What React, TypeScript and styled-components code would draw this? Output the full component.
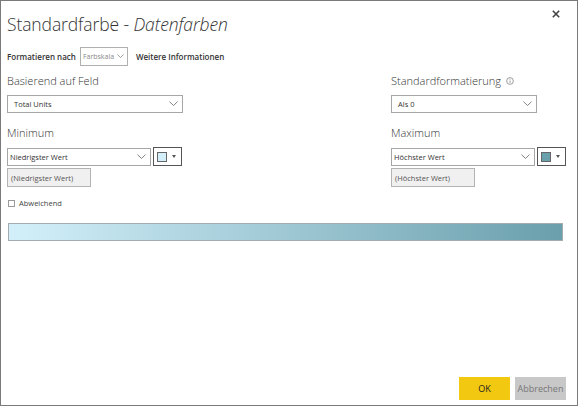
import React from "react";
import styled, { createGlobalStyle } from "styled-components";

const Global = createGlobalStyle`
  html, body { margin: 0; padding: 0; background: #fff; }
  * { box-sizing: border-box; }
  body { font-family: "Open Sans", "Noto Sans", sans-serif; color: #333; }
`;

const Dialog = styled.div`
  position: relative;
  width: 578px;
  height: 406px;
  border: 1px solid #7a7a7a;
  background: #fff;
  display: flex;
  flex-direction: column;
  padding: 10px 11px 5px 6px;
`;

const Close = styled.button`
  position: absolute;
  top: 6px;
  right: 14px;
  border: none;
  background: none;
  padding: 0;
  width: 14px;
  height: 14px;
  display: flex;
  align-items: center;
  justify-content: center;
`;

const Title = styled.h1`
  margin: 0;
  font-weight: 300;
  font-size: 17.5px;
  line-height: 26px;
  color: #333;
  letter-spacing: -0.1px;
  em { font-style: italic; }
`;

const FormatRow = styled.div`
  display: flex;
  align-items: center;
  gap: 4px;
  margin-top: 10px;
  height: 19px;
`;

const Bold = styled.span`
  font-size: 8px;
  font-weight: 600;
  color: #333;
`;

const SmallSelect = styled.div`
  width: 48px;
  height: 19px;
  border: 1px solid #b0b0b0;
  display: flex;
  align-items: center;
  justify-content: space-between;
  padding: 0 3px 0 2px;
  font-size: 7px;
  color: #888;
  margin-right: 4px;
`;

const Columns = styled.div`
  display: flex;
  justify-content: space-between;
  margin-top: 7px;
`;

const Column = styled.div<{ $w: number }>`
  width: ${(p) => p.$w}px;
  display: flex;
  flex-direction: column;
`;

const Label = styled.div<{ $top?: number }>`
  font-size: 11px;
  font-weight: 300;
  color: #333;
  height: 16px;
  line-height: 16px;
  margin-top: ${(p) => p.$top ?? 0}px;
  display: flex;
  align-items: center;
  gap: 5px;
`;

const Select = styled.div<{ $w: number; $pad?: number }>`
  width: ${(p) => p.$w}px;
  height: 18px;
  border: 1px solid #a6a6a6;
  display: flex;
  align-items: center;
  justify-content: space-between;
  padding: 0 4px 0 ${(p) => p.$pad ?? 2}px;
  font-size: 7.5px;
  color: #333;
  background: #fff;
`;

const FieldRow = styled.div`
  display: flex;
  align-items: center;
  gap: 2px;
  margin-top: 6px;
`;

const ColorButton = styled.div`
  width: 29px;
  height: 19px;
  border: 1px solid #555;
  display: flex;
  align-items: center;
  padding-left: 3px;
  gap: 5px;
`;

const Swatch = styled.div<{ $c: string }>`
  width: 10px;
  height: 10px;
  background: ${(p) => p.$c};
  border: 1px solid #666;
`;

const Caret = styled.div`
  width: 0;
  height: 0;
  border-left: 2.5px solid transparent;
  border-right: 2.5px solid transparent;
  border-top: 3px solid #555;
`;

const Disabled = styled.div`
  width: 84px;
  height: 19px;
  margin-top: 2px;
  background: #f0f0f0;
  border: 1px solid #b3b3b3;
  font-size: 7.5px;
  color: #555;
  display: flex;
  align-items: center;
  padding-left: 3px;
`;

const CheckRow = styled.label`
  display: flex;
  align-items: center;
  gap: 4px;
  margin-top: 11px;
  margin-left: 1px;
  font-size: 7.5px;
  color: #444;
`;

const Box = styled.span`
  width: 7px;
  height: 7px;
  border: 1px solid #999;
  background: #fff;
`;

const Gradient = styled.div`
  margin-top: 15px;
  margin-left: 1px;
  width: 555px;
  height: 18px;
  border: 1px solid #a2acb0;
  background: linear-gradient(to right, #d3f0fa, #a9d0dc 40%, #6a9fac);
`;

const Spacer = styled.div`
  flex: 1;
`;

const Footer = styled.div`
  display: flex;
  justify-content: flex-end;
  gap: 5px;
`;

const Btn = styled.button<{ $primary?: boolean }>`
  width: 51px;
  height: 23px;
  border: none;
  font-family: inherit;
  font-size: 9px;
  background: ${(p) => (p.$primary ? "#f2c811" : "#c8c8c8")};
  color: ${(p) => (p.$primary ? "#222" : "#777")};
  padding: 0;
`;

const Chevron = ({ size = 9 }: { size?: number }) => (
  <svg width={size} height={size * 0.6} viewBox="0 0 10 6">
    <path d="M0.5 0.7 L5 5 L9.5 0.7" fill="none" stroke="#666" strokeWidth="0.9" />
  </svg>
);

const Info = () => (
  <svg width="8" height="8" viewBox="0 0 10 10">
    <circle cx="5" cy="5" r="4.2" fill="none" stroke="#777" strokeWidth="0.9" />
    <path d="M5 4.3 V7.3" stroke="#777" strokeWidth="0.9" />
    <circle cx="5" cy="2.9" r="0.6" fill="#777" />
  </svg>
);

export default function App() {
  return (
    <>
      <Global />
      <Dialog>
        <Close aria-label="Schließen">
          <svg width="8" height="8" viewBox="0 0 8 8">
            <path d="M0.8 0.8 L7.2 7.2 M7.2 0.8 L0.8 7.2" stroke="#444" strokeWidth="1.6" />
          </svg>
        </Close>
        <Title>
          Standardfarbe - <em>Datenfarben</em>
        </Title>
        <FormatRow>
          <Bold>Formatieren nach</Bold>
          <SmallSelect>
            Farbskala <Chevron size={7} />
          </SmallSelect>
          <Bold>Weitere Informationen</Bold>
        </FormatRow>
        <Columns>
          <Column $w={176}>
            <Label>Basierend auf Feld</Label>
            <Select $w={176} $pad={6} style={{ marginTop: 6 }}>
              Total Units <Chevron />
            </Select>
            <Label $top={12}>Minimum</Label>
            <FieldRow>
              <Select $w={144}>
                Niedrigster Wert <Chevron />
              </Select>
              <ColorButton>
                <Swatch $c="#d3f0fa" />
                <Caret />
              </ColorButton>
            </FieldRow>
            <Disabled>(Niedrigster Wert)</Disabled>
          </Column>
          <Column $w={175}>
            <Label>
              Standardformatierung <Info />
            </Label>
            <Select $w={146} $pad={6} style={{ marginTop: 6 }}>
              Als 0 <Chevron />
            </Select>
            <Label $top={12}>Maximum</Label>
            <FieldRow>
              <Select $w={145}>
                Höchster Wert <Chevron />
              </Select>
              <ColorButton>
                <Swatch $c="#6a9fac" />
                <Caret />
              </ColorButton>
            </FieldRow>
            <Disabled>(Höchster Wert)</Disabled>
          </Column>
        </Columns>
        <CheckRow>
          <Box />
          Abweichend
        </CheckRow>
        <Gradient />
        <Spacer />
        <Footer>
          <Btn $primary>OK</Btn>
          <Btn>Abbrechen</Btn>
        </Footer>
      </Dialog>
    </>
  );
}
